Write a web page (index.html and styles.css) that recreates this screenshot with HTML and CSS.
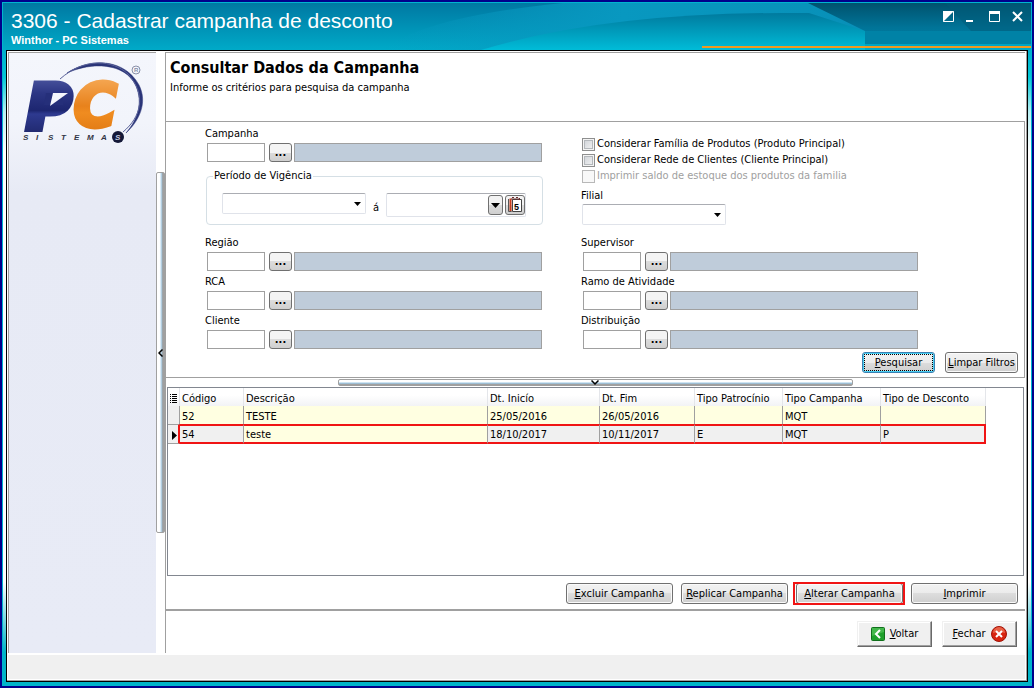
FILE: index.html
```
<!DOCTYPE html>
<html lang="pt-BR">
<head>
    <meta charset="UTF-8">
    <title>3306 - Cadastrar campanha de desconto</title>
    <link rel="stylesheet" href="styles.css">
</head>
<body>
	<div class="window">
		<header class="titlebar">
			<svg class="waves" viewBox="0 0 1028 47" preserveAspectRatio="none" aria-hidden="true">
				<defs>
					<linearGradient id="dark" x1="0" x2="0" y1="0" y2="1">
						<stop offset="0" stop-color="#00526e"/>
						<stop offset=".6" stop-color="#007498"/>
						<stop offset="1" stop-color="#0082a6"/>
					</linearGradient>
					<linearGradient id="band" x1="0" x2="1" y1="0" y2="0">
						<stop offset="0" stop-color="#0a9cc4" stop-opacity="0"/>
						<stop offset=".5" stop-color="#0898c0"/>
						<stop offset="1" stop-color="#0890b8"/>
					</linearGradient>
					<linearGradient id="wave" x1="0" x2="0" y1="0" y2="1">
						<stop offset="0" stop-color="#007a9e"/>
						<stop offset="1" stop-color="#00bcd8"/>
					</linearGradient>
				</defs>
				<path d="M380 47 Q420 14 560 0 H830 L860 27 V47z" fill="url(#band)"/>
				<path d="M478 47 Q600 10 780 10 L806 10 L862 28 V47z" fill="url(#wave)"/>
				<path d="M805 0 L862 28 V41 H1028 V0z" fill="url(#dark)"/>
				<path d="M862 28 H1028 V41 H862z" fill="#0082a6"/>
				<path d="M942 0 L968 28 H1028 V0z" fill="#005a78" opacity=".5"/>
			</svg>
			<div class="titles">
				<h1>3306 - Cadastrar campanha de desconto</h1>
				<p>Winthor - PC Sistemas</p>
			</div>
			<div class="winbtns">
				<button type="button" aria-label="Recolher"><svg width="12" height="12"><path d="M.5.5h10v10H.5z" fill="none" stroke="#fff"/><path d="M0 0h11L0 11z" fill="#fff"/></svg></button>
				<button type="button" aria-label="Minimizar"><svg width="12" height="12"><path d="M0 9h7v2H0z" fill="#fff"/></svg></button>
				<button type="button" aria-label="Maximizar"><svg width="12" height="12"><path d="M.5.5h10v10H.5z" fill="none" stroke="#fff"/><path d="M0 0h11v3H0z" fill="#fff"/></svg></button>
				<button type="button" aria-label="Fechar janela"><svg width="12" height="12"><path d="M1 1l9 9M10 1l-9 9" stroke="#fff" stroke-width="2"/></svg></button>
			</div>
		</header>
		<div class="client">
			<div class="columns">
				<aside class="sidebar">
					<svg class="logo" viewBox="0 0 147 100" role="img" aria-label="PC Sistemas">
						<defs>
							<linearGradient id="blue" x1="0" x2="0" y1="0" y2="1">
								<stop offset="0" stop-color="#5560a8"/>
								<stop offset=".3" stop-color="#2c3684"/>
								<stop offset=".55" stop-color="#1d2670"/>
								<stop offset=".6" stop-color="#2e3a90"/>
								<stop offset="1" stop-color="#1a2160"/>
							</linearGradient>
							<linearGradient id="orange" x1="0" x2="0" y1="0" y2="1">
								<stop offset="0" stop-color="#f8b060"/>
								<stop offset=".5" stop-color="#e8821c"/>
								<stop offset=".6" stop-color="#f08c20"/>
								<stop offset="1" stop-color="#dc7410"/>
							</linearGradient>
						</defs>
						<path d="M58 20 C82 4 116 6 130 32 C139 50 130 68 117 80 C129 66 134 50 127 33 C116 9 82 9 58 20z" fill="#2a3478" stroke="#2a3478" stroke-width=".5"/>
						<path d="M51 26 C76 4 104 7 119 21 C138 42 132 64 114 79" fill="none" stroke="#5a629a"/>
						<text class="logo-c" x="65" y="73" fill="url(#orange)" stroke="url(#orange)">C</text>
						<text class="logo-p" x="18" y="75" fill="url(#blue)" stroke="url(#blue)">P</text>
						<path d="M37 40h17v12H35z" fill="#252f7a"/>
						<path d="M44 40h15L41 53z" fill="#f4f6fc"/>
						<circle cx="127" cy="17" r="4" fill="none" stroke="#8a90a8"/>
						<text class="logo-r" x="125" y="19">R</text>
						<circle cx="109" cy="84" r="6" fill="#141838"/>
						<text class="logo-sub" x="14 27 39 52 65 78 92 106" y="87">SISTEMA<tspan fill="#c8cce0">S</tspan></text>
					</svg>
				</aside>
				<div class="vsplit">
					<button type="button" aria-label="Recolher painel"><svg width="5" height="8"><path d="M4.500 0.500L1 4l3.500 3.500" fill="none" stroke="#000" stroke-width="1.500"/></svg></button>
				</div>
				<main class="main">
					<div class="intro">
						<h2>Consultar Dados da Campanha</h2>
						<p>Informe os critérios para pesquisa da campanha</p>
					</div>
					<form class="filters">
						<div class="fields">
							<div class="top">
								<div class="lookup">
									<label for="campanha">Campanha</label>
									<div class="line"><input id="campanha" type="text"><button class="dots" type="button">...</button><output></output></div>
								</div>
								<fieldset>
									<legend>Período de Vigência</legend>
									<div class="period">
										<select class="combo" aria-label="Data inicial"><option></option></select>
										<span class="until">á</span>
										<div class="datebox">
											<input type="text" aria-label="Data final">
											<button class="drop" type="button" aria-label="Abrir lista"><svg width="9" height="5"><path d="M0 0h9L4.500 5z"/></svg></button>
											<button class="cal" type="button" aria-label="Calendário">
												<svg width="16" height="18">
													<path d="M5.500 3.500h9v12h-9z" fill="#fff" stroke="#444"/>
													<path d="M3.500 2.500v13" stroke="#c83c1c" stroke-width="2"/>
													<path d="M1.500 3v12.500h3" fill="none" stroke="#555"/>
													<path d="M5 4V2q1-2 2 0v2M9 4V2q1-2 2 0v2M12.500 4V2" fill="none" stroke="#6a3030"/>
													<text x="7" y="14">5</text>
												</svg>
											</button>
										</div>
									</div>
								</fieldset>
							</div>
							<div class="top">
								<div class="checks">
									<label><input type="checkbox">Considerar Família de Produtos (Produto Principal)</label>
									<label><input type="checkbox">Considerar Rede de Clientes (Cliente Principal)</label>
									<label class="off"><input type="checkbox" disabled>Imprimir saldo de estoque dos produtos da familia</label>
								</div>
								<label for="filial">Filial</label>
								<select class="combo" id="filial"><option></option></select>
							</div>
							<div class="lookup">
								<label for="regiao">Região</label>
								<div class="line"><input id="regiao" type="text"><button class="dots" type="button">...</button><output></output></div>
							</div>
							<div class="lookup">
								<label for="supervisor">Supervisor</label>
								<div class="line"><input id="supervisor" type="text"><button class="dots" type="button">...</button><output></output></div>
							</div>
							<div class="lookup">
								<label for="rca">RCA</label>
								<div class="line"><input id="rca" type="text"><button class="dots" type="button">...</button><output></output></div>
							</div>
							<div class="lookup">
								<label for="ramo">Ramo de Atividade</label>
								<div class="line"><input id="ramo" type="text"><button class="dots" type="button">...</button><output></output></div>
							</div>
							<div class="lookup">
								<label for="cliente">Cliente</label>
								<div class="line"><input id="cliente" type="text"><button class="dots" type="button">...</button><output></output></div>
							</div>
							<div class="lookup">
								<label for="distribuicao">Distribuição</label>
								<div class="line"><input id="distribuicao" type="text"><button class="dots" type="button">...</button><output></output></div>
							</div>
						</div>
						<div class="search">
							<button class="btn focused" type="button"><u>P</u>esquisar</button>
							<button class="btn" type="button"><u>L</u>impar Filtros</button>
						</div>
					</form>
					<div class="hsplit">
						<button type="button" aria-label="Recolher filtros"><svg width="8" height="5"><path d="M.5.5L4 4 7.500.5" fill="none" stroke="#000" stroke-width="1.500"/></svg></button>
					</div>
					<div class="grid">
						<table>
							<colgroup>
								<col class="c-mark"><col class="c-cod"><col class="c-desc"><col class="c-ini"><col class="c-fim"><col class="c-pat"><col class="c-camp"><col class="c-tipo">
							</colgroup>
							<thead>
								<tr>
									<th><svg width="7" height="9"><path d="M0 .5h1M0 2.500h1M0 4.500h1M0 6.500h1M0 8.500h1M2 .5h5M2 2.500h5M2 4.500h5M2 6.500h5M2 8.500h5" stroke="#000"/></svg></th>
									<th>Código</th>
									<th>Descrição</th>
									<th>Dt. Inicío</th>
									<th>Dt. Fim</th>
									<th>Tipo Patrocínio</th>
									<th>Tipo Campanha</th>
									<th>Tipo de Desconto</th>
								</tr>
							</thead>
							<tbody>
								<tr>
									<td class="mark"></td>
									<td>52</td>
									<td>TESTE</td>
									<td>25/05/2016</td>
									<td>26/05/2016</td>
									<td></td>
									<td>MQT</td>
									<td></td>
								</tr>
								<tr class="selected">
									<td class="mark"><svg width="5" height="9"><path d="M0 0l5 4.500L0 9z"/></svg></td>
									<td>54</td>
									<td class="current">teste</td>
									<td>18/10/2017</td>
									<td>10/11/2017</td>
									<td>E</td>
									<td>MQT</td>
									<td>P</td>
								</tr>
							</tbody>
						</table>
					</div>
					<div class="actions">
						<button class="btn" type="button"><u>E</u>xcluir Campanha</button>
						<button class="btn" type="button"><u>R</u>eplicar Campanha</button>
						<button class="btn marked" type="button"><u>A</u>lterar Campanha</button>
						<button class="btn" type="button"><u>I</u>mprimir</button>
					</div>
					<div class="nav">
						<button type="button">
							<svg width="14" height="14"><rect x=".5" y=".5" width="13" height="13" rx="1" fill="#1fa02c" stroke="#11701c"/><path d="M1 1h12v4L1 9z" fill="#5cc860" opacity=".6"/><path d="M9 3L5 7l4 4" fill="none" stroke="#fff" stroke-width="2"/></svg>
							<span><u>V</u>oltar</span>
						</button>
						<button type="button">
							<span><u>F</u>echar</span>
							<svg width="16" height="16"><circle cx="8" cy="8" r="7.500" fill="#d82410" stroke="#a01408"/><path d="M2 7a6 6 0 0 1 12 0q-6-2-12 0z" fill="#f07c60" opacity=".7"/><path d="M5 5l6 6M11 5l-6 6" stroke="#fff" stroke-width="2"/></svg>
						</button>
					</div>
				</main>
			</div>
			<footer class="status"></footer>
		</div>
	</div>
</body>
</html>
```
FILE: styles.css
```
*{
	box-sizing: border-box;
	margin: 0;
	padding: 0;
}
body{
	font: 11px/14px Tahoma, "DejaVu Sans Condensed", "Noto Sans", sans-serif;
	color: #000;
}
button, input, select{
	font: inherit;
	color: inherit;
}
svg{
	display: block;
}

/* window frame */
.window{
	display: flex;
	flex-direction: column;
	min-height: 100vh;
	padding: 1px 3px 4px;
	border: 2px solid #00008b;
	background: linear-gradient(#0078a2 0, #00b0cc 50px, #00c8d8 75px, #b8f0f4 110px, #fff 150px, #fff 580px, #00b4c8 650px);
	box-shadow: inset 0 0 0 1px #00b4d0;
}
.titlebar{
	position: relative;
	display: flex;
	justify-content: space-between;
	height: 47px;
	margin: 0 -2px;
	padding: 8px 7px 0 8px;
	color: #fff;
	background: linear-gradient(#0078a2, #00aac8);
}
.titlebar::after{
	content: "";
	position: absolute;
	right: 0;
	bottom: 2px;
	width: 32%;
	height: 2px;
	background: #f09a20;
}
.waves{
	position: absolute;
	top: 0;
	left: 0;
	width: 100%;
	height: 100%;
}
.titles, .winbtns{
	position: relative;
}
.titles h1{
	font: 21px/20px "Liberation Sans", Arial, sans-serif;
}
.titles p{
	font: bold 11px/18px "Liberation Sans", Arial, sans-serif;
}
.winbtns{
	display: flex;
	gap: 11px;
}
.winbtns button{
	width: 12px;
	height: 12px;
	border: 0;
	background: none;
}

.client{
	flex: 1;
	display: flex;
	flex-direction: column;
	margin: 0 1px;
	border: 1px solid #000;
	background: #fff;
	box-shadow: inset -1px -1px #a0a0a0;
	padding: 1px 2px 2px 1px;
}
.columns{
	flex: 1;
	display: flex;
}
.sidebar{
	width: 148px;
	border: solid #a0a0a0;
	border-width: 1px 0 0 1px;
	background: linear-gradient(#f4f6fc, #f2f4fb 70px, #e7eaf5 140px, #e8ebf6);
}
.logo{
	width: 147px;
	height: 100px;
}
.logo text{
	font-family: "Liberation Sans", Arial, sans-serif;
	font-weight: bold;
	font-style: italic;
}
.logo .logo-p, .logo .logo-c{
	font-family: "DejaVu Sans", Verdana, sans-serif;
	font-size: 58px;
	stroke-width: 5px;
}
.logo .logo-p{
	font-size: 60px;
	stroke-width: 7px;
}
.logo .logo-r{
	font-size: 6px;
	font-style: normal;
	fill: #8a90a8;
}
.logo .logo-sub{
	font-size: 8px;
	fill: #303444;
}
.vsplit{
	width: 9px;
	display: flex;
	flex-direction: column;
	justify-content: center;
}
.vsplit button{
	display: flex;
	align-items: center;
	justify-content: center;
	height: 60%;
	border: 1px solid #a0a0a0;
	border-radius: 2px;
	background: linear-gradient(90deg, #fff 35%, #cfe4f2 55%, #90b4cc 75%, #a0a0a0 80%);
}

.main{
	flex: 1;
	display: flex;
	flex-direction: column;
	min-width: 0;
	border: solid #a0a0a0;
	border-width: 1px 0 0 1px;
}
.intro{
	height: 69px;
	padding: 4px;
	border-bottom: 1px solid #a0a0a0;
}
.intro h2{
	font-size: 16px;
	line-height: 22px;
}
.intro p{
	margin-top: 2px;
}

/* filters */
.filters{
	padding: 5px 6px 4px 39px;
	border: solid #a0a0a0;
	border-width: 0 1px 1px 0;
}
.fields{
	display: grid;
	grid-template-columns: minmax(0, 1fr) minmax(0, 1fr);
	gap: 3px 39px;
	padding-right: 100px;
}
.fields label{
	display: block;
}
.top{
	height: 106px;
}
.lookup .line{
	display: flex;
	margin: 2px 0 1px 2px;
}
.line input{
	width: 58px;
	height: 19px;
	padding: 0 3px;
	border: 1px solid #a0a0a0;
}
.dots{
	width: 23px;
	height: 19px;
	margin: 0 2px 0 4px;
	font-weight: bold;
	line-height: 14px;
	border: 1px solid #707070;
	border-radius: 3px;
	background: linear-gradient(#f4f4f4 50%, #dcdcdc 50%, #cfcfcf);
}
.line output{
	flex: 1;
	border: 1px solid #a0a0a0;
	background: #bfccda;
}
fieldset{
	min-width: 0;
	margin: 7px -1px 0 1px;
	padding: 0 16px 7px 15px;
	border: 1px solid #d5dfe5;
	border-radius: 4px;
}
legend{
	margin-left: -9px;
	padding: 0 1px;
}
.period{
	display: flex;
	margin-top: 10px;
}
.combo{
	display: block;
	flex-shrink: 0;
	width: 144px;
	height: 21px;
	padding: 0 4px;
	border: 1px solid #e0e3ea;
	border-top-color: #abadb3;
	border-radius: 2px;
	appearance: none;
	background: #fff url("data:image/svg+xml,%3Csvg xmlns='http://www.w3.org/2000/svg' width='7' height='4'%3E%3Cpath d='M0 0h7L3.5 4z'/%3E%3C/svg%3E") no-repeat right 4px center;
}
.until{
	padding: 8px 7px 0;
}
.datebox{
	flex: 1;
	display: flex;
	min-width: 0;
	height: 24px;
	padding: 1px 0 1px 1px;
	border: 1px solid #e0e3ea;
	border-top-color: #abadb3;
	border-radius: 2px;
}
.datebox input{
	flex: 1;
	min-width: 0;
	border: 0;
}
.datebox button{
	display: flex;
	align-items: center;
	justify-content: center;
	border: 1px solid #707070;
	border-radius: 3px;
	background: linear-gradient(#f2f2f2 50%, #dcdcdc 50%, #cfcfcf);
}
.datebox .drop{
	width: 15px;
	margin-right: 2px;
}
.datebox .cal{
	width: 20px;
}
.cal text{
	font: bold 9px "Liberation Sans", Arial, sans-serif;
}
.checks{
	padding: 9px 0 5px;
}
.checks label{
	display: flex;
	align-items: center;
	gap: 2px;
	height: 16px;
	padding-left: 1px;
	white-space: nowrap;
}
.checks input{
	width: 13px;
	height: 13px;
	appearance: none;
	border: 1px solid #8e8f8f;
	box-shadow: inset 0 0 0 1px #f4f4f4, inset 0 0 0 2px #b4b8bc;
	background: linear-gradient(135deg, #cbcfd5, #f6f6f6);
}
.checks .off{
	color: #a0a0a0;
}
.checks .off input{
	border-color: #b8b8b8;
	box-shadow: none;
	background: #f8f8f8;
}
#filial{
	margin: 1px 0 0 1px;
}

.btn{
	position: relative;
	height: 21px;
	border: 1px solid #707070;
	border-radius: 3px;
	background: linear-gradient(#f2f2f2, #ebebeb 50%, #dddddd 50%, #cfcfcf);
	box-shadow: inset 0 0 0 1px #fafafa;
	white-space: nowrap;
}
.search{
	display: flex;
	justify-content: flex-end;
	gap: 10px;
	margin-top: 2px;
}
.search .btn{
	width: 73px;
}
.focused{
	border-color: #3c7fb1;
	box-shadow: inset 0 0 0 1px #48d0f4;
	outline: 1px dotted #000;
	outline-offset: -3px;
}

.hsplit{
	display: flex;
	justify-content: center;
	height: 9px;
	padding: 1px 0;
}
.hsplit button{
	display: flex;
	justify-content: center;
	width: 60%;
	border: 1px solid #a0a0a0;
	border-radius: 2px;
	background: linear-gradient(#fff 35%, #cfe4f2 50%, #90b4cc 75%, #a0a0a0 80%);
}

/* results */
.grid{
	flex: 1;
	margin: 0 1px;
	border: 1px solid #828790;
}
table{
	table-layout: fixed;
	width: 818px;
	border-collapse: separate;
	border-spacing: 0;
}
.c-mark{ width: 12px; }
.c-cod{ width: 64px; }
.c-desc{ width: 244px; }
.c-ini{ width: 112px; }
.c-fim{ width: 95px; }
.c-pat{ width: 88px; }
.c-camp{ width: 98px; }
.c-tipo{ width: 105px; }
th{
	height: 18px;
	padding: 3px 0 0 2px;
	font-weight: normal;
	text-align: left;
	border-right: 1px solid #e4e6ea;
	background: linear-gradient(#fff 40%, #f2f3f5);
}
td{
	height: 18px;
	padding: 3px 0 0 2px;
	border-right: 1px solid #a0a0a0;
	background: #ffffe1;
}
.mark{
	background: #f0f0f0;
}
.selected td{
	height: 20px;
	padding-top: 2px;
	border-top: 2px solid #f01414;
	border-bottom: 2px solid #f01414;
	background: #f0f0f0;
}
.selected .current{
	background: #ffffe1;
}
.selected .mark{
	padding-left: 4px;
	border-top: 1px solid #a0a0a0;
	border-bottom: 1px solid #a0a0a0;
	border-right: 2px solid #f01414;
}
.selected td:last-child{
	border-right: 2px solid #f01414;
}

.actions{
	display: flex;
	justify-content: flex-end;
	gap: 8px;
	padding: 7px 7px 5px;
	border-bottom: 2px solid #a0a0a0;
}
.actions .btn{
	width: 107px;
}
.marked::after{
	content: "";
	position: absolute;
	inset: -2px -3px -2px -4px;
	border: 2px solid #f01414;
}
.nav{
	display: flex;
	justify-content: flex-end;
	gap: 10px;
	padding: 10px 8px 6px;
}
.nav button{
	display: flex;
	align-items: center;
	justify-content: center;
	gap: 5px;
	width: 75px;
	height: 26px;
	border: 1px solid;
	border-color: #f0f0f0 #696969 #696969 #f0f0f0;
	background: #f0f0f0;
	box-shadow: inset -1px -1px #a0a0a0, inset 1px 1px #fff;
}
.status{
	height: 24px;
	margin-top: 2px;
	background: #f0f0f0;
}
```
